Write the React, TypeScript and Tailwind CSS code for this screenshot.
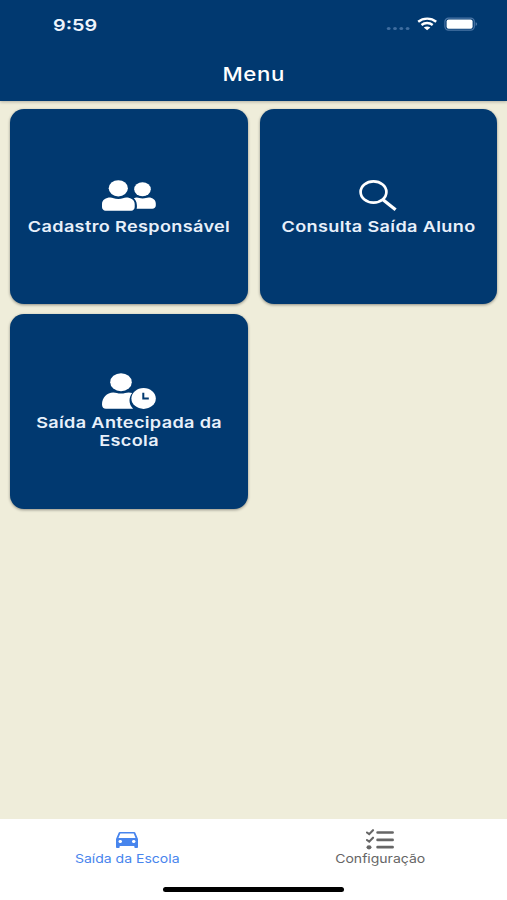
import type { ReactNode } from 'react'
import clsx from 'clsx'

function PeopleIcon() {
  return (
    <svg width="54" height="32" viewBox="0 0 54 32" fill="currentColor" aria-hidden="true">
      <ellipse cx="16.3" cy="8.3" rx="9.6" ry="8.1" />
      <ellipse cx="40.5" cy="9.2" rx="8.3" ry="7" />
      <path d="M0 27v-3c0-4 4-6.400 8.300-6.400 2.400 0 4 1.400 8 1.400s5.600-1.400 8-1.400c4.300 0 8.400 2.400 8.400 6.400v3c0 2-1.500 3.700-3.500 3.700H3.500C1.500 30.700 0 29 0 27z" />
      <path d="M31.800 18.300c1-.5 2-.7 3-.7 2 0 3 1 5.800 1s4-1 6.200-1c3.800 0 7 2.500 7 6v1.900c0 2-1.500 3.200-3.500 3.200H34.600c.4-1.200.4-2.500.2-4.200-.2-2.600-1.200-4.700-3-6.200z" />
    </svg>
  )
}

function SearchIcon() {
  return (
    <svg width="38" height="32" viewBox="0 0 38 32" fill="none" stroke="currentColor" strokeWidth="2.700" aria-hidden="true">
      <ellipse cx="14.500" cy="12" rx="12.900" ry="10.600" />
      <path d="M24 19.800l12.600 10" strokeWidth="3.300" />
    </svg>
  )
}

function UserClockIcon() {
  return (
    <svg width="54" height="37" viewBox="0 0 54 37" fill="currentColor" aria-hidden="true">
      <ellipse cx="19" cy="9.200" rx="10.800" ry="9" />
      <path d="M0 31.500c0-6.800 4.800-12 11.300-12 2.700 0 4.200 1.100 7.700 1.100s5-1.100 7.700-1.100c1.400 0 2.300.2 3.500.600-3.600 4.500-3.800 11 .9 15.700H4C1.600 35.800 0 34.300 0 31.500z" />
      <ellipse cx="41.600" cy="25.500" rx="12.200" ry="10.400" />
      <path d="M41.300 19.700v5.800h5.500" fill="none" stroke="#013970" strokeWidth="2" />
    </svg>
  )
}

function CarIcon() {
  return (
    <svg width="22" height="16" viewBox="3 5 18 16" preserveAspectRatio="none" fill="currentColor" aria-hidden="true">
      <path d="M18.920 6.010C18.720 5.420 18.160 5 17.500 5h-11c-.66 0-1.210.42-1.420 1.010L3 12v8c0 .55.45 1 1 1h1c.55 0 1-.45 1-1v-1h12v1c0 .55.45 1 1 1h1c.55 0 1-.45 1-1v-8l-2.080-5.990zM6.500 16c-.83 0-1.500-.67-1.500-1.500S5.670 13 6.500 13s1.500.67 1.500 1.500S7.330 16 6.500 16zm11 0c-.83 0-1.500-.67-1.500-1.500s.67-1.500 1.500-1.500 1.500.67 1.500 1.500-.67 1.500-1.500 1.500zM5 11l1.500-4.500h11L19 11H5z" />
    </svg>
  )
}

function TasksIcon() {
  return (
    <svg width="28" height="21" viewBox="0 0 28 21" fill="none" stroke="currentColor" strokeLinecap="round" aria-hidden="true">
      <path d="M1 3.500l2.200 1.700L7 1.200M1 11l2.200 1.700L7 8.700" strokeWidth="2.100" />
      <path d="M11.600 3.500h15M11.600 10.900h15M11.600 18.200h15" strokeWidth="2.700" />
      <ellipse cx="3" cy="18.300" rx="2.500" ry="2.100" fill="currentColor" stroke="none" />
    </svg>
  )
}

function StatusIcons() {
  return (
    <svg width="92" height="14" viewBox="0 0 92 14" fill="none" aria-hidden="true">
      <g fill="#3f6d9f">
        <ellipse cx="2.700" cy="11.500" rx="1.900" ry="1.500" />
        <ellipse cx="9" cy="11.500" rx="1.900" ry="1.500" />
        <ellipse cx="15.300" cy="11.500" rx="1.900" ry="1.500" />
        <ellipse cx="21.600" cy="11.500" rx="1.900" ry="1.500" />
      </g>
      <path d="M32.200 4.700c5-4.100 13-4.100 18 0M35.500 8c3.200-2.600 8-2.600 11.200 0" stroke="#fff" strokeWidth="2.400" />
      <path d="M37.800 10.500c1.900-1.400 4.700-1.400 6.600 0l-3.300 2.800z" fill="#fff" />
      <rect x="58.900" y="1.200" width="29.400" height="12" rx="3.600" stroke="#4a75a5" strokeWidth="1.200" />
      <rect x="60.600" y="2.600" width="26" height="9.200" rx="2" fill="#fff" />
      <path d="M89.600 5.300c2 .5 2 3.100 0 3.600z" fill="#4a75a5" />
    </svg>
  )
}

type MenuCardProps = {
  icon: ReactNode
  children: ReactNode
  twoLines?: boolean
}

function MenuCard({ icon, children, twoLines }: MenuCardProps) {
  return (
    <button
      type="button"
      className={clsx(
        'flex h-[195px] flex-col items-center justify-center rounded-[14px] bg-[#013970] text-white shadow-[0_1px_3px_rgba(0,0,0,0.4)]',
        twoLines ? 'pb-px' : 'pt-[3px]'
      )}
    >
      {icon}
      <span
        className={clsx(
          'block scale-x-[1.19] text-center text-[15.200px] leading-[18px] font-semibold tracking-[0.300px] whitespace-nowrap text-[#e8f0fa]',
          twoLines ? 'mt-[4px]' : 'mt-[6px]'
        )}
      >
        {children}
      </span>
    </button>
  )
}

export default function App() {
  return (
    <div className="flex h-[900px] w-[507px] flex-col overflow-hidden bg-[#efedda] font-['Inter',sans-serif]">
      <header className="z-10 h-[101px] shrink-0 bg-[#013970] text-white shadow-[0_1px_3px_rgba(0,0,0,0.25)]">
        <div className="flex h-[48px] items-center justify-between pr-[29px] pl-[53px]">
          <span className="origin-left scale-x-[1.2] pt-[2px] text-[16.500px] font-semibold text-[#eef4fc]">9:59</span>
          <StatusIcons />
        </div>
        <h1 className="flex h-[54px] items-center justify-center">
          <span className="scale-x-[1.17] text-[19px] font-medium tracking-[0.500px]">Menu</span>
        </h1>
      </header>

      <main className="grid flex-1 grid-cols-2 content-start gap-x-3 gap-y-[10px] px-[10px] pt-2">
        <MenuCard icon={<PeopleIcon />}>Cadastro Responsável</MenuCard>
        <MenuCard icon={<SearchIcon />}>Consulta Saída Aluno</MenuCard>
        <MenuCard icon={<UserClockIcon />} twoLines>
          Saída Antecipada da
          <br />
          Escola
        </MenuCard>
      </main>

      <footer className="flex h-[81px] shrink-0 flex-col items-center bg-white">
        <nav className="grid w-full grid-cols-2">
          <button type="button" className="flex h-[68px] flex-col items-center pt-[13px] text-[#4885ed]">
            <CarIcon />
            <span className="mt-[3px] scale-x-[1.21] text-[11.600px] leading-4">Saída da Escola</span>
          </button>
          <button type="button" className="flex h-[68px] flex-col items-center pt-[10px] text-[#666]">
            <TasksIcon />
            <span className="mt-px scale-x-[1.21] text-[11.600px] leading-4">Configuração</span>
          </button>
        </nav>
        <div className="h-[5px] w-[181px] rounded-full bg-black" />
      </footer>
    </div>
  )
}
